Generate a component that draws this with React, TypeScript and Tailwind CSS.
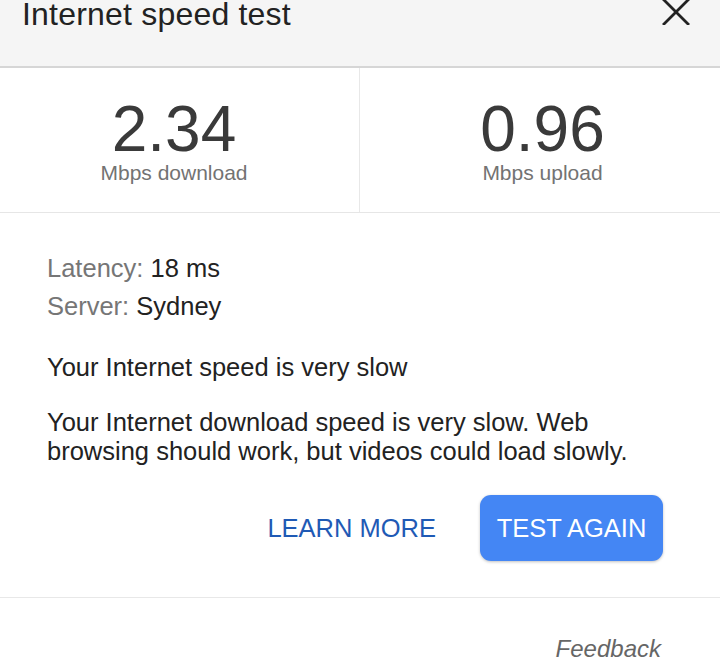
import React from 'react';

const font = { fontFamily: '"Liberation Sans", Arial, sans-serif' };

const CloseIcon: React.FC = () => (
  <svg width="28" height="26" viewBox="0 0 28 26" className="shrink-0">
    <line x1="2" y1="1" x2="26" y2="25" stroke="#222" strokeWidth="2.8" strokeLinecap="square" />
    <line x1="26" y1="1" x2="2" y2="25" stroke="#222" strokeWidth="2.8" strokeLinecap="square" />
  </svg>
);

const Stat: React.FC<{ value: string; label: string; className?: string }> = ({ value, label, className }) => (
  <div className={`flex flex-col items-center pt-[29px] ${className ?? ''}`}>
    <div className="text-[64px] leading-none text-[#3a3a3a]">{value}</div>
    <div className="mt-[1px] text-[21px] leading-none text-[#737373]">{label}</div>
  </div>
);

export default function App() {
  return (
    <div className="w-[720px] h-[659px] overflow-hidden bg-white flex flex-col" style={font}>
      {/* Header */}
      <div className="h-[68px] shrink-0 bg-[#f5f5f5] border-b-2 border-[#d6d6d6] flex items-start justify-between pl-[22px] pr-[30px]">
        <div className="text-[32px] leading-[31px] -mt-[1px] tracking-[0.2px] text-[#222]">Internet speed test</div>
        <div className="-mt-[1px]">
          <CloseIcon />
        </div>
      </div>

      {/* Speeds */}
      <div className="h-[145px] shrink-0 grid grid-cols-2 border-b border-[#e6e6e6]">
        <Stat value="2.34" label="Mbps download" className="border-r border-[#e8e8e8] pr-[11px]" />
        <Stat value="0.96" label="Mbps upload" className="pl-[5px]" />
      </div>

      {/* Details */}
      <div className="pl-[47px] pt-[36px] text-[25.5px] text-[#222]">
        <div className="leading-[38px]">
          <span className="text-[#767676]">Latency:</span> 18 ms
        </div>
        <div className="leading-[38px]">
          <span className="text-[#767676]">Server:</span> Sydney
        </div>
        <p className="mt-[28px] leading-[29px]">Your Internet speed is very slow</p>
        <p className="mt-[26px] leading-[29px] pr-[60px]">
          Your Internet download speed is very slow. Web browsing should work, but videos could load slowly.
        </p>
      </div>

      {/* Actions */}
      <div className="mt-[29px] flex items-center justify-end gap-[44px] pr-[57px]">
        <button className="text-[25.5px] leading-[29px] text-[#1f5ab5]">LEARN MORE</button>
        <button className="h-[66px] w-[183px] rounded-[11px] bg-[#4486f4] text-white text-[25.5px] leading-[29px] shadow-[0_1px_3px_rgba(0,0,0,0.25)]">
          TEST AGAIN
        </button>
      </div>

      {/* Footer */}
      <div className="mt-[36px] border-t border-[#e8e8e8] pt-[39px] flex justify-end pr-[59px]">
        <span className="italic text-[24px] leading-none text-[#666]">Feedback</span>
      </div>
    </div>
  );
}
